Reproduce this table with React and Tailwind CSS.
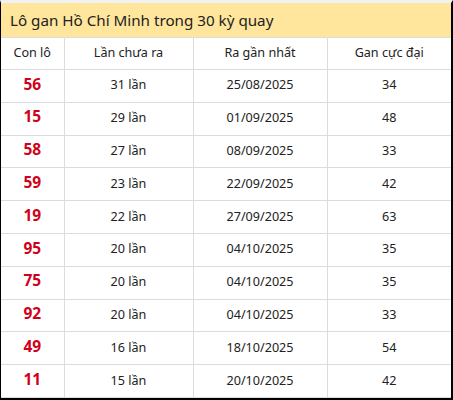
import React from "react";

const rows = [
  ["56", "31 lần", "25/08/2025", "34"],
  ["15", "29 lần", "01/09/2025", "48"],
  ["58", "27 lần", "08/09/2025", "33"],
  ["59", "23 lần", "22/09/2025", "42"],
  ["19", "22 lần", "27/09/2025", "63"],
  ["95", "20 lần", "04/10/2025", "35"],
  ["75", "20 lần", "04/10/2025", "35"],
  ["92", "20 lần", "04/10/2025", "33"],
  ["49", "16 lần", "18/10/2025", "54"],
  ["11", "15 lần", "20/10/2025", "42"],
];

export default function App() {
  return (
    <div
      className="w-[453px] h-[400px] bg-white border-l border-l-black border-r-2 border-r-black border-b-2 border-b-black border-t-[3px] border-t-[#f1f1f1] text-[#222]"
      style={{ fontFamily: '"Noto Sans", "Open Sans", sans-serif' }}
    >
      <div className="h-[34px] bg-[#ffe69c] flex items-center pl-[9px] text-[15.2px] text-[#222]">
        Lô gan Hồ Chí Minh trong 30 kỳ quay
      </div>
      <table className="w-[450px] border-collapse table-fixed text-[12.6px]">
        <colgroup>
          <col className="w-[63px]" />
          <col className="w-[129px]" />
          <col className="w-[134px]" />
          <col className="w-[124px]" />
        </colgroup>
        <thead>
          <tr className="h-[32px]">
            <th className="font-normal border border-[#dcdcdc] border-l-0 text-center">Con lô</th>
            <th className="font-normal border border-[#dcdcdc] text-center">Lần chưa ra</th>
            <th className="font-normal border border-[#dcdcdc] text-center">Ra gần nhất</th>
            <th className="font-normal border border-[#dcdcdc] border-r-0 text-center">Gan cực đại</th>
          </tr>
        </thead>
        <tbody>
          {rows.map((r) => (
            <tr key={r[0] + r[2]} className="h-[32.8px]">
              <td className="border border-[#dcdcdc] border-l-0 text-center text-[15.5px] leading-none pb-[3px] font-bold text-[#d0021b]">{r[0]}</td>
              <td className="border border-[#dcdcdc] text-center">{r[1]}</td>
              <td className="border border-[#dcdcdc] text-center">{r[2]}</td>
              <td className="border border-[#dcdcdc] border-r-0 text-center">{r[3]}</td>
            </tr>
          ))}
        </tbody>
      </table>
    </div>
  );
}
